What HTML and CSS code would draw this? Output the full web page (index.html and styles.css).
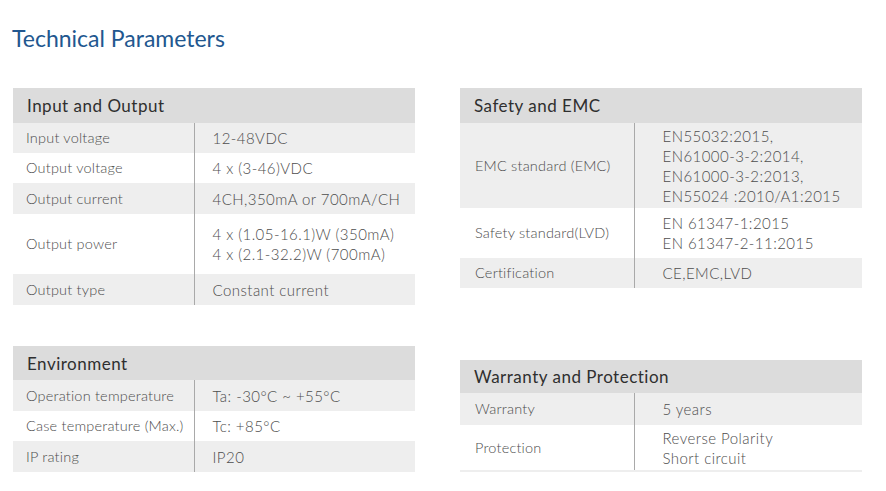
FILE: index.html
```html
<!DOCTYPE html>
<html>
<head>
<meta charset="utf-8">
<link rel="stylesheet" href="styles.css">
</head>
<body>
<h1 class="title">Technical Parameters</h1>
<div class="grid">
  <div class="col col-left">
    <table class="spec spec-a">
      <colgroup><col class="ck"><col class="cv"></colgroup>
      <tr class="head"><th colspan="2">Input and Output</th></tr>
      <tr class="g h30"><td class="k">Input voltage</td><td class="v">12-48VDC</td></tr>
      <tr class="w h30"><td class="k">Output voltage</td><td class="v">4 x (3-46)VDC</td></tr>
      <tr class="g h31"><td class="k">Output current</td><td class="v">4CH,350mA or 700mA/CH</td></tr>
      <tr class="w h60"><td class="k">Output power</td><td class="v">4 x (1.05-16.1)W (350mA)<br>4 x (2.1-32.2)W (700mA)</td></tr>
      <tr class="g h31"><td class="k">Output type</td><td class="v">Constant current</td></tr>
    </table>
    <table class="spec spec-a env">
      <colgroup><col class="ck"><col class="cv"></colgroup>
      <tr class="head"><th colspan="2">Environment</th></tr>
      <tr class="g h31"><td class="k">Operation temperature</td><td class="v">Ta: -30°C ~ +55°C</td></tr>
      <tr class="w h30"><td class="k">Case temperature (Max.)</td><td class="v">Tc: +85°C</td></tr>
      <tr class="g h31"><td class="k">IP rating</td><td class="v">IP20</td></tr>
    </table>
  </div>
  <div class="col col-right">
    <table class="spec spec-b">
      <colgroup><col class="ck"><col class="cv"></colgroup>
      <tr class="head"><th colspan="2">Safety and EMC</th></tr>
      <tr class="g h85"><td class="k">EMC standard (EMC)</td><td class="v">EN55032:2015,<br>EN61000-3-2:2014,<br>EN61000-3-2:2013,<br>EN55024 :2010/A1:2015</td></tr>
      <tr class="w h50"><td class="k">Safety standard(LVD)</td><td class="v">EN 61347-1:2015<br>EN 61347-2-11:2015</td></tr>
      <tr class="g h30"><td class="k">Certification</td><td class="v">CE,EMC,LVD</td></tr>
    </table>
    <table class="spec spec-b warranty">
      <colgroup><col class="ck"><col class="cv"></colgroup>
      <tr class="head"><th colspan="2">Warranty and Protection</th></tr>
      <tr class="g h32"><td class="k">Warranty</td><td class="v">5 years</td></tr>
      <tr class="w h46 last"><td class="k">Protection</td><td class="v">Reverse Polarity<br>Short circuit</td></tr>
    </table>
  </div>
</div>
</body>
</html>
```
FILE: styles.css
```css
html, body {
  margin: 0;
  padding: 0;
  background: #ffffff;
}
body {
  font-family: "Lato", "Open Sans", sans-serif;
  color: #555555;
}
.title {
  margin: 0;
  padding: 25px 0 0 12px;
  height: 61px;
  box-sizing: border-box;
  font-size: 23px;
  font-weight: 400;
  line-height: 26px;
  color: #22578f;
  letter-spacing: 0;
}
.grid {
  display: grid;
  grid-template-columns: 402px 402px;
  column-gap: 45px;
  padding: 27px 0 0 13px;
  align-items: start;
}
.col {
  display: flex;
  flex-direction: column;
}
.col-left { gap: 41px; }
.col-right { gap: 72px; }
.spec {
  width: 402px;
  border-collapse: collapse;
  table-layout: fixed;
}
.spec-a .ck { width: 181px; }
.spec-b .ck { width: 174px; }
.spec th {
  background: #dcdcdc;
  text-align: left;
  font-weight: 400;
  font-size: 17px;
  color: #2f2f2f;
  height: 35px;
  padding: 0 0 0 14px;
  letter-spacing: 0.5px;
}
.env th { height: 34px; }
.warranty th { height: 33px; }
.spec td {
  padding: 0;
  font-size: 14.5px;
  font-weight: 300;
  line-height: 20px;
  vertical-align: middle;
  white-space: nowrap;
}
.spec .g td { background: #eeeeee; }
.spec .w td { background: #ffffff; }
.spec td.k {
  padding-left: 13px;
  color: #4d4d4d;
  letter-spacing: 0.2px;
}
.spec td.v {
  border-left: 1px solid #a9a9a9;
  color: #4d4d4d;
  font-size: 15px;
  letter-spacing: 0.45px;
}
.spec-a td.v { padding-left: 18px; }
.spec-b td.k { padding-left: 15px; }
.spec-b td.v { padding-left: 28px; }
.h30 { height: 30px; }
.h31 { height: 31px; }
.h32 { height: 32px; }
.h46 { height: 46px; }
.h50 { height: 50px; }
.h60 { height: 60px; }
.h85 { height: 85px; }
.last td { border-bottom: 2px solid #eeeeee; }
```
